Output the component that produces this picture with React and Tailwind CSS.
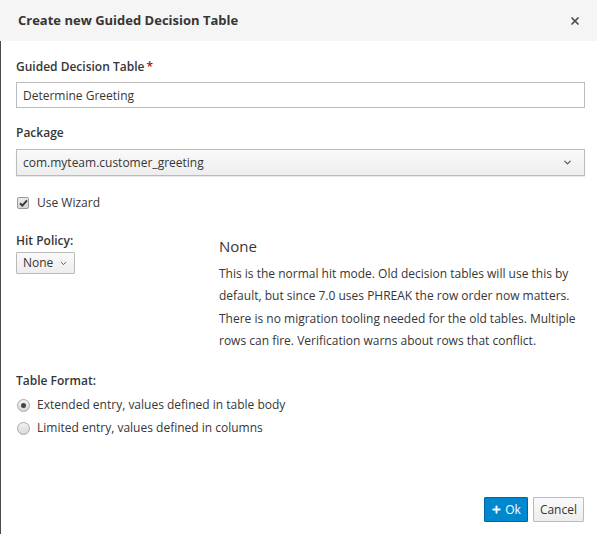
import { ChevronDown, Plus, X } from "lucide-react";

function Check() {
  return (
    <span className="w-[12px] h-[12px] rounded-[2px] border border-[#9a9a9a] bg-gradient-to-b from-[#ececec] to-[#d6d6d6] flex items-center justify-center ml-[1px]">
      <svg width="9" height="8" viewBox="0 0 9 8">
        <path d="M1 4.2 L3.4 6.6 L8 1.4" fill="none" stroke="#3a3a3a" strokeWidth="2" />
      </svg>
    </span>
  );
}

function Radio({ on }) {
  return (
    <span className="w-[13px] h-[13px] rounded-full border border-[#a8a8a8] bg-gradient-to-b from-[#f2f2f2] to-[#d8d8d8] flex items-center justify-center ml-[1px]">
      {on && <span className="w-[5px] h-[5px] rounded-full bg-[#444]" />}
    </span>
  );
}

function App() {
  return (
    <div
      className="w-[597px] h-[534px] bg-white text-[#363636] flex flex-col overflow-hidden"
      style={{ fontFamily: '"Open Sans", "Liberation Sans", sans-serif' }}
    >
      <div className="h-[41px] bg-[#f5f5f5] flex items-center justify-between pl-[18px] pr-[16px] shrink-0">
        <h4 className="text-[13px] font-bold text-[#363636]">Create new Guided Decision Table</h4>
        <X size={12} strokeWidth={3.5} className="text-[#4d4d4d]" />
      </div>

      <div className="flex-1 flex flex-col border-l border-[#4a4a4a] pl-[15px] pr-[12px] text-[12px] leading-[20px]">
        <label className="mt-[16px] font-semibold">
          Guided Decision Table<span className="text-[#c00] ml-[2px]">*</span>
        </label>
        <input
          defaultValue="Determine Greeting"
          className="mt-[5px] h-[26px] w-full border border-[#bbb] px-[6px] text-[12px] text-[#363636] outline-none"
        />

        <label className="mt-[15px] font-semibold">Package</label>
        <div className="mt-[6px] h-[27px] w-full border border-[#bbb] bg-gradient-to-b from-[#fafafa] to-[#ededed] flex items-center justify-between px-[6px] shadow-[0_1px_1px_rgba(0,0,0,0.08)]">
          <span>com.myteam.customer_greeting</span>
          <ChevronDown size={11} strokeWidth={2.5} className="text-[#4d5258] mr-[5px]" />
        </div>

        <label className="mt-[17px] flex items-center gap-[8px]">
          <Check />
          Use Wizard
        </label>

        <div className="mt-[18px] grid grid-cols-[203px_1fr]">
          <div>
            <div className="font-semibold">Hit Policy:</div>
            <button className="mt-[1px] h-[22px] px-[6px] border border-[#bbb] bg-gradient-to-b from-[#fafafa] to-[#ededed] flex items-center gap-[6px] text-[12px] rounded-[1px]">
              None
              <ChevronDown size={9} strokeWidth={2.5} className="text-[#4d5258]" />
            </button>
          </div>
          <div className="pt-[5px]">
            <div className="text-[15px] leading-[20px]">None</div>
            <p className="mt-[7px] leading-[22.3px]">
              This is the normal hit mode. Old decision tables will use this by default, but since 7.0 uses
              PHREAK the row order now matters. There is no migration tooling needed for the old tables.
              Multiple rows can fire. Verification warns about rows that conflict.
            </p>
          </div>
        </div>

        <div className="mt-[19px] font-semibold">Table Format:</div>
        <label className="mt-[4px] flex items-center gap-[7px]">
          <Radio on />
          Extended entry, values defined in table body
        </label>
        <label className="mt-[3px] flex items-center gap-[7px]">
          <Radio />
          Limited entry, values defined in columns
        </label>

        <div className="mt-auto mb-[12px] flex justify-end gap-[5px] pr-[1px]">
          <button className="h-[25px] px-[6px] bg-[#0088ce] border border-[#00659c] text-white text-[12px] flex items-center gap-[3px] rounded-[1px]">
            <Plus size={11} strokeWidth={4} />
            Ok
          </button>
          <button className="h-[25px] px-[6px] border border-[#bbb] bg-gradient-to-b from-[#fafafa] to-[#ededed] text-[12px] rounded-[1px]">
            Cancel
          </button>
        </div>
      </div>
    </div>
  );
}

export default App;
